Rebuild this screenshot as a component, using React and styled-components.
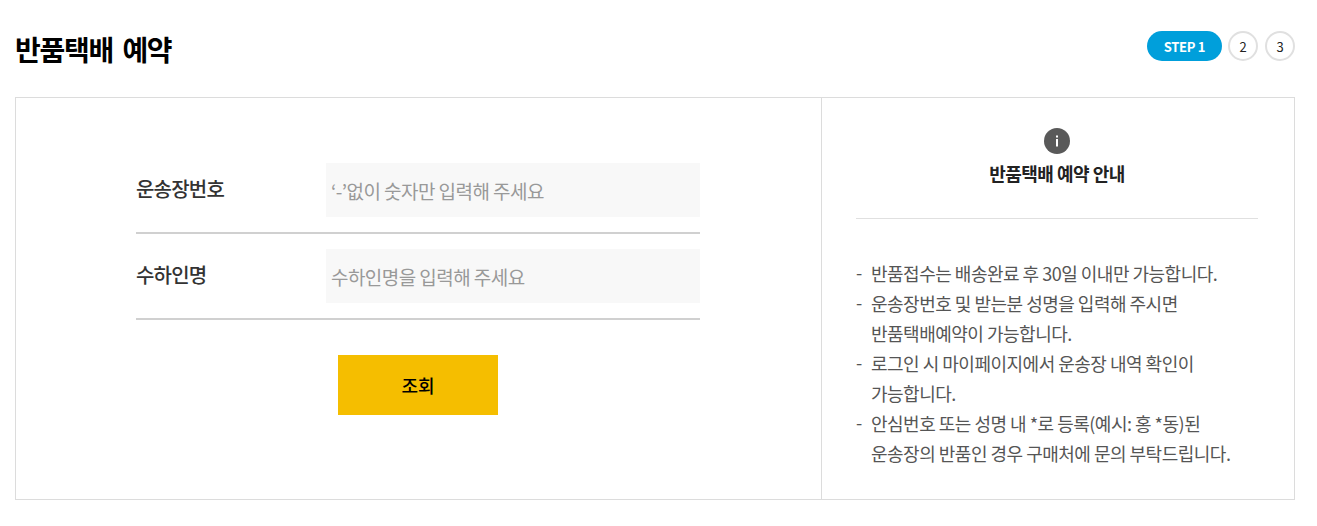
import React from "react";
import styled, { createGlobalStyle } from "styled-components";

const GlobalStyle = createGlobalStyle`
  html, body {
    margin: 0;
    padding: 0;
    background: #fff;
    font-family: "Noto Sans CJK KR", "Noto Sans", sans-serif;
  }
  * {
    box-sizing: border-box;
  }
`;

const Page = styled.div`
  width: 1317px;
  padding: 0 22px 0 15px;
`;
const Header = styled.div`
  height: 97px;
  display: flex;
  align-items: center;
  justify-content: space-between;
  padding-bottom: 5px;
`;
const Title = styled.h2`
  margin: 5px 0 0;
  font-size: 28px;
  line-height: 40px;
  font-weight: 700;
  letter-spacing: -1.3px;
  word-spacing: 4.5px;
  color: #000;
`;
const Steps = styled.div`
  display: flex;
  align-items: center;
  gap: 7px;
`;
const StepPill = styled.span`
  width: 75px;
  height: 30px;
  margin-right: -1px;
  border-radius: 15px;
  background: #009fdb;
  color: #fff;
  font-size: 13px;
  font-weight: 700;
  letter-spacing: -0.3px;
  display: flex;
  align-items: center;
  justify-content: center;
`;
const StepCircle = styled.span`
  width: 30px;
  height: 30px;
  border: 2px solid #e0e0e0;
  border-radius: 50%;
  color: #222;
  font-size: 13px;
  display: flex;
  align-items: center;
  justify-content: center;
`;
const Box = styled.div`
  height: 403px;
  border: 1px solid #dcdcdc;
  display: flex;
`;
const FormPanel = styled.div`
  width: 806px;
  padding: 65px 121px 0 120px;
  border-right: 1px solid #dcdcdc;
`;
const Row = styled.div`
  height: 71px;
  margin-bottom: 15px;
  border-bottom: 2px solid #d0d0d0;
  display: flex;
  align-items: flex-start;
`;
const Label = styled.label`
  width: 190px;
  height: 54px;
  display: flex;
  align-items: center;
  padding-bottom: 3px;
  font-size: 20px;
  font-weight: 500;
  letter-spacing: -0.8px;
  color: #333;
`;
const Field = styled.input`
  width: 374px;
  height: 54px;
  padding: 0 5px;
  border: 0;
  outline: 0;
  background: #f8f8f8;
  font-family: inherit;
  font-size: 19px;
  letter-spacing: -0.55px;
  color: #333;

  &::placeholder {
    color: #999;
    opacity: 1;
  }
`;
const ButtonWrap = styled.div`
  padding: 20px 0 0 202px;
`;
const SearchButton = styled.button`
  width: 160px;
  height: 60px;
  border: 0;
  background: #f5be00;
  color: #000;
  font-family: inherit;
  font-size: 18px;
  font-weight: 500;
  letter-spacing: 0;
`;
const GuidePanel = styled.div`
  flex: 1;
  padding: 30px 36px 0 34px;
`;
const GuideHead = styled.div`
  height: 91px;
  border-bottom: 1px solid #e0e0e0;
  display: flex;
  flex-direction: column;
  align-items: center;
`;
const InfoIcon = styled.svg`
  width: 26px;
  height: 26px;
  display: block;
`;
const GuideTitle = styled.strong`
  margin-top: 5px;
  font-size: 18px;
  line-height: 28px;
  font-weight: 700;
  letter-spacing: -0.5px;
  color: #222;
`;
const GuideList = styled.ul`
  list-style: none;
  margin: 0;
  padding: 39px 0 0;
`;
const GuideItem = styled.li`
  position: relative;
  padding-left: 15px;
  font-size: 18px;
  line-height: 30px;
  letter-spacing: -0.5px;
  color: #555;
  white-space: pre-line;

  &::before {
    content: "-";
    position: absolute;
    left: 0;
    top: -1px;
  }
`;

const guides = [
  "반품접수는 배송완료 후 30일 이내만 가능합니다.",
  "운송장번호 및 받는분 성명을 입력해 주시면\n반품택배예약이 가능합니다.",
  "로그인 시 마이페이지에서 운송장 내역 확인이\n가능합니다.",
  "안심번호 또는 성명 내 *로 등록(예시: 홍 *동)된\n운송장의 반품인 경우 구매처에 문의 부탁드립니다.",
];

export default function App() {
  return (
    <Page>
      <GlobalStyle />
      <Header>
        <Title>반품택배 예약</Title>
        <Steps>
          <StepPill>STEP 1</StepPill>
          <StepCircle>2</StepCircle>
          <StepCircle>3</StepCircle>
        </Steps>
      </Header>
      <Box>
        <FormPanel>
          <Row>
            <Label htmlFor="invoice">운송장번호</Label>
            <Field id="invoice" placeholder="‘-’없이 숫자만 입력해 주세요" />
          </Row>
          <Row>
            <Label htmlFor="receiver">수하인명</Label>
            <Field id="receiver" placeholder="수하인명을 입력해 주세요" />
          </Row>
          <ButtonWrap>
            <SearchButton type="button">조회</SearchButton>
          </ButtonWrap>
        </FormPanel>
        <GuidePanel>
          <GuideHead>
            <InfoIcon viewBox="0 0 26 26">
              <circle cx="13" cy="13" r="13" fill="#595959" />
              <rect x="12" y="7.5" width="2" height="2" fill="#fff" />
              <rect x="12" y="11" width="2" height="7.5" fill="#fff" />
            </InfoIcon>
            <GuideTitle>반품택배 예약 안내</GuideTitle>
          </GuideHead>
          <GuideList>
            {guides.map((text) => (
              <GuideItem key={text}>{text}</GuideItem>
            ))}
          </GuideList>
        </GuidePanel>
      </Box>
    </Page>
  );
}
